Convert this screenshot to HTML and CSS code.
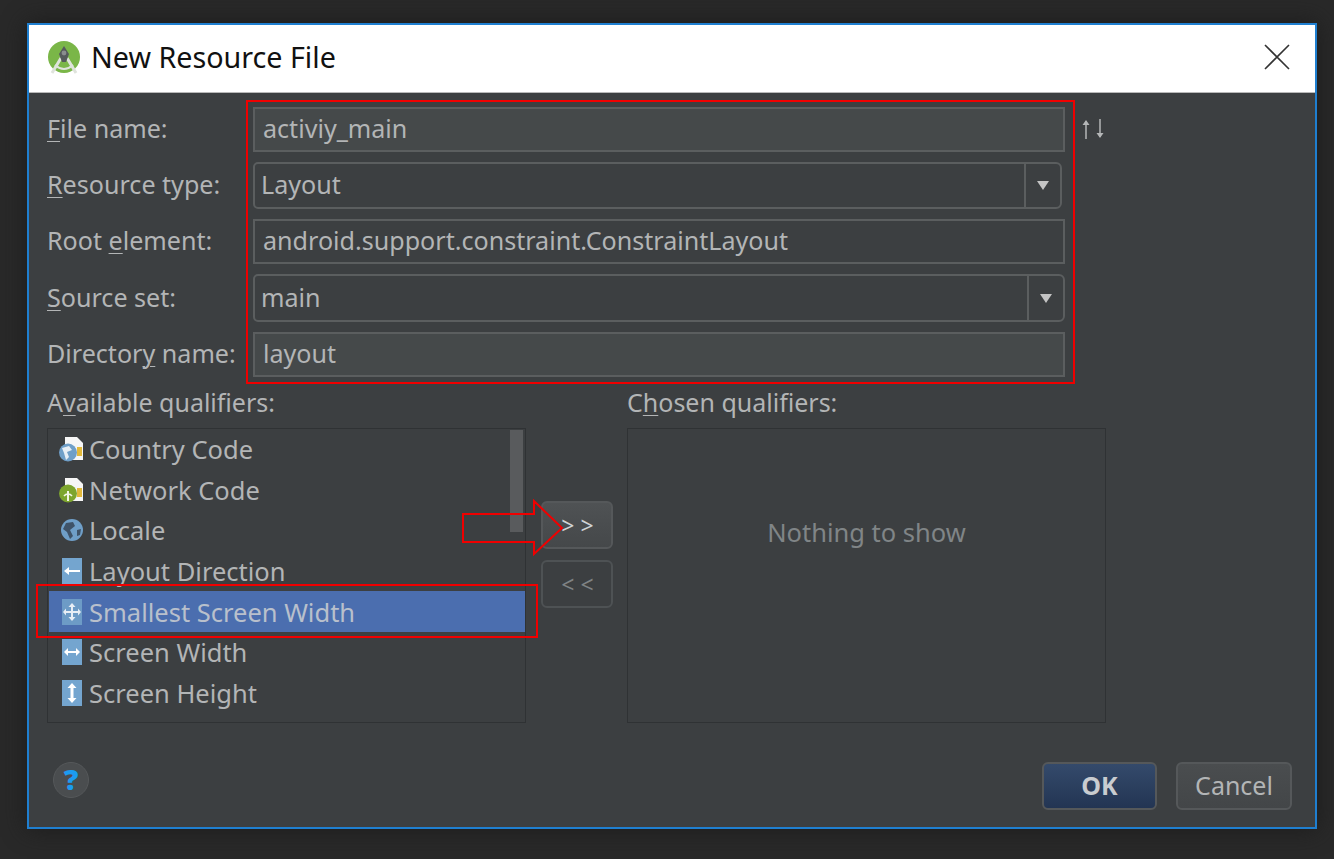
FILE: index.html
```html
<!DOCTYPE html>
<html lang="en">
<head>
<meta charset="utf-8">
<title>New Resource File</title>
<link rel="stylesheet" href="styles.css">
</head>
<body>
<div class="screen">
  <div class="dialog">
    <header class="titlebar">
      <svg class="logo" width="36" height="36" viewBox="0 0 36 36">
        <circle cx="17" cy="16" r="16" fill="#7ab648"/>
        <path d="M5 32 L14 17 M29 32 L20 17" stroke="#dfe3dc" stroke-width="3" fill="none"/>
        <path d="M8 24 Q17 32 26 24" stroke="#dfe3dc" stroke-width="2" fill="none"/>
        <path d="M17 5 L22 13 L19 21 H15 L12 13 Z" fill="#55595c"/>
        <circle cx="17" cy="12" r="2.4" fill="#8a8d8f"/>
      </svg>
      <h1 class="title">New Resource File</h1>
      <svg class="close" width="26" height="26" viewBox="0 0 26 26">
        <path d="M1 1 L25 25 M25 1 L1 25" stroke="#333" stroke-width="1.6" fill="none"/>
      </svg>
    </header>
    <main class="content">
      <section class="form">
        <label class="label"><u>F</u>ile name:</label>
        <div class="field filled">activiy_main</div>
        <svg class="sort" width="26" height="22" viewBox="0 0 26 22">
          <path d="M6 21 V3 M20 1 V19" stroke="#b4b6b7" stroke-width="1.500" fill="none"/>
          <path d="M2.500 7 L6 2 L9.500 7 Z M16.500 15 L20 20 L23.500 15 Z" fill="#b4b6b7"/>
        </svg>

        <label class="label"><u>R</u>esource type:</label>
        <div class="select narrow"><span class="select-value">Layout</span><span class="select-arrow"><i class="tri"></i></span></div>
        <span></span>

        <label class="label">Root <u>e</u>lement:</label>
        <div class="field">android.support.constraint.ConstraintLayout</div>
        <span></span>

        <label class="label"><u>S</u>ource set:</label>
        <div class="select"><span class="select-value">main</span><span class="select-arrow"><i class="tri"></i></span></div>
        <span></span>

        <label class="label">Director<u>y</u> name:</label>
        <div class="field filled">layout</div>
        <span></span>
      </section>

      <section class="qualifiers">
        <div class="column">
          <div class="heading">A<u>v</u>ailable qualifiers:</div>
          <div class="listbox">
            <div class="scrollbar"></div>
            <div class="row">
              <svg class="icon" width="24" height="26" viewBox="0 0 24 26">
                <path d="M6 1 H18 L24 7 V24 H6 Z" fill="#f6f6f6"/><rect x="18" y="11" width="5" height="9" fill="#e2b93b"/>
                <circle cx="9" cy="16.500" r="9" fill="#6f9fc8"/><path d="M3 12 L10 10 L13 14 L8 16 L10 21 L7 24 L5 17 Z" fill="#e6eef5"/>
              </svg>Country Code</div>
            <div class="row">
              <svg class="icon" width="24" height="26" viewBox="0 0 24 26">
                <path d="M6 1 H18 L24 7 V24 H6 Z" fill="#f6f6f6"/><rect x="18" y="11" width="5" height="9" fill="#e2b93b"/>
                <circle cx="9" cy="16.500" r="9" fill="#7da52e"/><path d="M8 14 H10 V24 H8 Z" fill="#f2f5e6"/><path d="M5 19 A5 5 0 0 1 13 19" stroke="#f2f5e6" stroke-width="1.500" fill="none"/>
              </svg>Network Code</div>
            <div class="row">
              <svg class="icon" width="24" height="26" viewBox="0 0 24 26">
                <circle cx="13" cy="13" r="11" fill="#6f9fc8"/><path d="M7 6 L14 5 L16 9 L11 13 L14 19 L11 22 L8 15 L4 12 Z M18 13 L22 12 L21 18 L18 19 Z" fill="#3f5368"/>
              </svg>Locale</div>
            <div class="row">
              <svg class="icon" width="24" height="26" viewBox="0 0 24 26">
                <rect x="3" y="0" width="20" height="26" fill="#74a5cf"/><path d="M5 13 L10 9 V12 H21 V14 H10 V17 Z" fill="#fff"/>
              </svg>Layout Direction</div>
            <div class="row selected">
              <svg class="icon" width="24" height="26" viewBox="0 0 24 26">
                <rect x="3" y="0" width="20" height="26" fill="#6d9bc6"/><path d="M13 4 L16.500 8 H14 V12 H19 V9.500 L22 13 L19 16.500 V14 H14 V18 H16.500 L13 22 L9.500 18 H12 V14 H7 V16.500 L4 13 L7 9.500 V12 H12 V8 H9.500 Z" fill="#e8eef5"/>
              </svg>Smallest Screen Width</div>
            <div class="row">
              <svg class="icon" width="24" height="26" viewBox="0 0 24 26">
                <rect x="3" y="0" width="20" height="26" fill="#74a5cf"/><path d="M5 13 L9 9 V12 H17 V9 L21 13 L17 17 V14 H9 V17 Z" fill="#fff"/>
              </svg>Screen Width</div>
            <div class="row">
              <svg class="icon" width="24" height="26" viewBox="0 0 24 26">
                <rect x="3" y="0" width="20" height="26" fill="#74a5cf"/><path d="M13 3 L17.500 8 H14.500 V18 H17.500 L13 23 L8.500 18 H11.500 V8 H8.500 Z" fill="#fff"/>
              </svg>Screen Height</div>
          </div>
        </div>
        <div class="transfer">
          <button class="move active">&gt; &gt;</button>
          <button class="move">&lt; &lt;</button>
        </div>
        <div class="column">
          <div class="heading">C<u>h</u>osen qualifiers:</div>
          <div class="listbox empty">Nothing to show</div>
        </div>
      </section>

      <footer class="footer">
        <div class="help">?</div>
        <div class="actions">
          <button class="btn primary">OK</button>
          <button class="btn">Cancel</button>
        </div>
      </footer>
    </main>
  </div>

  <div class="mark mark-form"></div>
  <div class="mark mark-row"></div>
  <svg class="mark-arrow" width="104" height="58" viewBox="0 0 104 58">
    <path d="M2 15 H73 V2 L101 29 L73 55 V43 H2 Z" fill="none" stroke="#f00000" stroke-width="2"/>
  </svg>
</div>
</body>
</html>
```
FILE: styles.css
```css
* { box-sizing: border-box; }
html, body { margin: 0; padding: 0; }
body {
  background: #292929;
  font-family: "Noto Sans", "Open Sans", sans-serif;
  color: #b3b5b6;
  overflow: hidden;
}
u { text-underline-offset: 3px; text-decoration-thickness: 1px; }
.screen {
  position: relative;
  width: 1334px;
  height: 859px;
  padding: 23px 0 0 27px;
}
.dialog {
  width: 1290px;
  height: 806px;
  border: 2px solid #1f7fd0;
  background: #3c3f41;
  display: flex;
  flex-direction: column;
  box-shadow: 0 0 22px #1c1c1c;
}
.titlebar {
  height: 68px;
  flex: none;
  background: #fff;
  border-bottom: 1px solid #b9b9b9;
  display: flex;
  align-items: center;
  padding: 0 25px 4px 18px;
}
.logo { flex: none; margin-top: 4px; }
.title {
  margin: 0 0 0 8px;
  font-size: 28.700px;
  font-weight: 400;
  color: #111;
  flex: 1;
}
.close { flex: none; }
.content {
  flex: 1;
  padding: 14px 24px 0 18px;
  display: flex;
  flex-direction: column;
}
.form {
  display: grid;
  grid-template-columns: 206px 812px 1fr;
  grid-template-rows: 45px 47px 45px 48px 45px;
  row-gap: 10px;
  align-items: center;
}
.label { font-size: 25.100px; padding-bottom: 3px; }
.field {
  height: 100%;
  border: 2px solid #5b5e5f;
  font-size: 25.100px;
  line-height: 39px;
  padding-left: 8px;
}
.filled { background: #45494a; }
.sort { margin-left: 15px; margin-top: -2px; }
.select {
  height: 100%;
  border: 2px solid #5b5e5f;
  border-radius: 5px 6px 6px 5px;
  font-size: 25.100px;
  display: flex;
}
.narrow { width: 809px; }
.select-value { flex: 1; padding: 0 0 3px 6px; display: flex; align-items: center; }
.select-arrow {
  width: 36px;
  border-left: 2px solid #5b5e5f;
  display: flex;
  align-items: center;
  justify-content: center;
}
.tri {
  width: 0;
  height: 0;
  border-left: 6px solid transparent;
  border-right: 6px solid transparent;
  border-top: 9px solid #c4c4c4;
}
.qualifiers {
  display: grid;
  grid-template-columns: 479px 101px 479px;
  margin-top: 11px;
}
.column { display: flex; flex-direction: column; }
.heading {
  font-size: 25px;
  height: 30px;
  line-height: 28px;
  margin-bottom: 10px;
}
.listbox {
  position: relative;
  height: 295px;
  border: 1px solid #2f3234;
  font-size: 25.500px;
}
.row {
  height: 40.600px;
  display: flex;
  align-items: center;
  padding-left: 11px;
  gap: 6px;
}
.row.selected {
  background: #4b6eaf;
  color: #b9c0cc;
  position: relative;
  margin: 0 0 0 1px;
  padding-left: 10px;
  width: 476px;
}
.icon { flex: none; }
.scrollbar {
  position: absolute;
  top: 1px;
  right: 2px;
  width: 13px;
  height: 102px;
  background: #595b5d;
}
.empty {
  display: flex;
  align-items: center;
  justify-content: center;
  color: #808587;
  padding: 0 0 87px 0;
}
.transfer {
  display: flex;
  flex-direction: column;
  gap: 11px;
  padding: 113px 0 0 15px;
}
.move {
  width: 72px;
  height: 48px;
  border: 2px solid #4e5254;
  border-radius: 6px;
  background: transparent;
  font-family: inherit;
  font-size: 23px;
  color: #7f8385;
  padding: 0 0 0 1px;
}
.move.active {
  background: linear-gradient(#4f5254, #45484a);
  border-color: #55585a;
  color: #cfd3d6;
}
.footer {
  display: flex;
  align-items: center;
  justify-content: space-between;
  margin-top: 39px;
  padding-left: 6px;
  margin-right: -1px;
}
.help {
  width: 36px;
  height: 36px;
  border-radius: 50%;
  background: #4a4d4f;
  border: 1px solid #55585a;
  color: #1b9bf0;
  font-family: "Open Sans", sans-serif;
  font-weight: 800;
  font-size: 29px;
  line-height: 32px;
  text-align: center;
  margin-top: -12px;
}
.actions { display: flex; gap: 19px; }
.btn {
  width: 116px;
  height: 48px;
  border: 2px solid #55585a;
  border-radius: 6px;
  background: linear-gradient(#4a4d4f, #434648);
  font-family: inherit;
  font-size: 25px;
  color: #b3b5b6;
  padding: 0 0 2px;
}
.btn.primary {
  width: 115px;
  background: linear-gradient(#344a6b, #233553);
  font-weight: 700;
  color: #c9ccd0;
}
.mark {
  position: absolute;
  border: 2px solid #f00000;
  pointer-events: none;
}
.mark-form { left: 246px; top: 100px; width: 829px; height: 284px; }
.mark-row { left: 36px; top: 584px; width: 502px; height: 54px; }
.mark-arrow { position: absolute; left: 461px; top: 499px; }
```
